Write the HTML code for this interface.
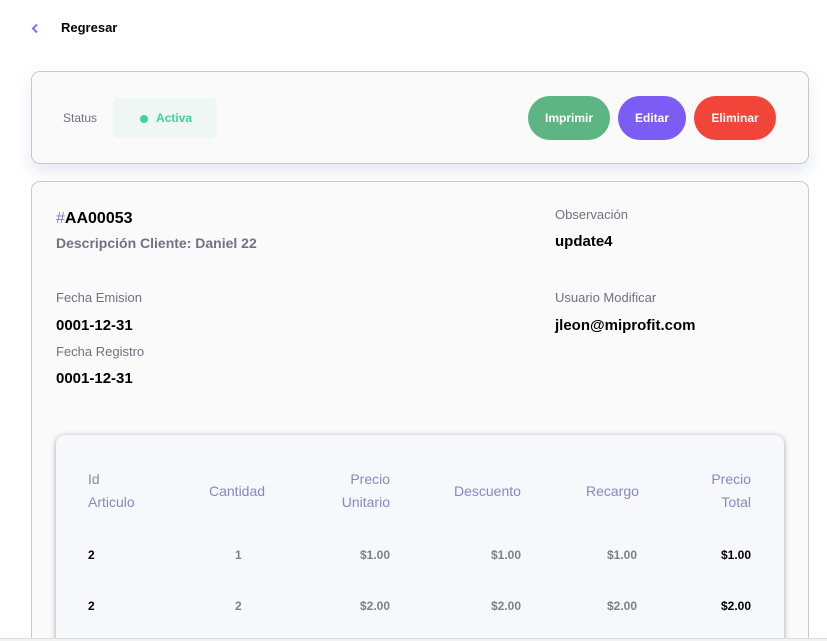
<!DOCTYPE html>
<html><head><meta charset="utf-8"><style>
*{margin:0;padding:0;box-sizing:border-box}
html,body{width:827px;height:641px;overflow:hidden}
body{background:#fff;font-family:"Liberation Sans",sans-serif;position:relative}
.a{position:absolute;white-space:nowrap}
.card{position:absolute;left:31px;width:778px;background:#fafafa;border:1px solid #c8c8c8;border-radius:9px}
.btn{position:absolute;top:96px;height:44px;border-radius:22px;color:#fff;font-size:12px;font-weight:bold;display:flex;align-items:center;justify-content:center}
.lbl{font-size:13px;color:#6e7280}
.val{font-size:15px;font-weight:bold;color:#000}
.th{font-size:14px;color:#8589c2;line-height:23px}
.td{font-size:12px;font-weight:bold;color:#808080}
</style></head><body>
<svg class="a" style="left:31px;top:23px" width="8" height="11" viewBox="0 0 8 11"><path d="M6 1.5 L2 5.5 L6 9.5" stroke="#8b6cf0" stroke-width="2" fill="none"/></svg>
<div class="a" style="left:61px;top:20px;font-size:13px;font-weight:bold">Regresar</div>

<div class="card" style="top:71px;height:93px;box-shadow:0 8px 16px rgba(200,205,230,0.45)"></div>
<div class="a lbl" style="left:63px;top:111px;font-size:12px">Status</div>
<div class="a" style="left:113px;top:98px;width:104px;height:40px;background:#eef7f3;border-radius:6px"></div>
<div class="a" style="left:140px;top:115px;width:8px;height:8px;border-radius:50%;background:#3dd498"></div>
<div class="a" style="left:156px;top:111px;font-size:12px;font-weight:bold;color:#3dd498">Activa</div>
<div class="btn" style="left:528px;width:82px;background:#5db583">Imprimir</div>
<div class="btn" style="left:618px;width:68px;background:#7b5cf5">Editar</div>
<div class="btn" style="left:694px;width:82px;background:#f2453a">Eliminar</div>

<div class="card" style="top:181px;height:480px"></div>
<div class="a" style="left:56px;top:210px;font-size:16px;font-weight:bold"><span style="color:#7b7fc0;font-weight:normal">#</span>AA00053</div>
<div class="a" style="left:56px;top:235px;font-size:14px;font-weight:bold;color:#707480">Descripción Cliente: Daniel 22</div>
<div class="a lbl" style="left:555px;top:207px">Observación</div>
<div class="a val" style="left:555px;top:233px">update4</div>
<div class="a lbl" style="left:56px;top:290px">Fecha Emision</div>
<div class="a val" style="left:56px;top:317px">0001-12-31</div>
<div class="a lbl" style="left:56px;top:344px">Fecha Registro</div>
<div class="a val" style="left:56px;top:370px">0001-12-31</div>
<div class="a lbl" style="left:555px;top:290px">Usuario Modificar</div>
<div class="a val" style="left:555px;top:317px">jleon@miprofit.com</div>

<div class="a" style="left:56px;top:435px;width:728px;height:230px;background:#f7f8fc;border-radius:9px;box-shadow:0 1px 6px rgba(0,0,0,0.35)"></div>
<div class="a th" style="left:88px;top:468px">Id<br>Articulo</div>
<div class="a th" style="left:209px;top:480px">Cantidad</div>
<div class="a th" style="right:437px;top:468px;text-align:right">Precio<br>Unitario</div>
<div class="a th" style="left:454px;top:480px">Descuento</div>
<div class="a th" style="left:586px;top:480px">Recargo</div>
<div class="a th" style="right:76px;top:468px;text-align:right">Precio<br>Total</div>

<div class="a td" style="left:88px;top:548px;color:#000">2</div>
<div class="a td" style="left:235px;top:548px">1</div>
<div class="a td" style="right:437px;top:548px">$1.00</div>
<div class="a td" style="right:306px;top:548px">$1.00</div>
<div class="a td" style="right:190px;top:548px">$1.00</div>
<div class="a td" style="right:76px;top:548px;color:#000">$1.00</div>

<div class="a td" style="left:88px;top:599px;color:#000">2</div>
<div class="a td" style="left:235px;top:599px">2</div>
<div class="a td" style="right:437px;top:599px">$2.00</div>
<div class="a td" style="right:306px;top:599px">$2.00</div>
<div class="a td" style="right:190px;top:599px">$2.00</div>
<div class="a td" style="right:76px;top:599px;color:#000">$2.00</div>
<div class="a" style="left:0;top:638px;width:827px;height:3px;background:#f2f2f2;border-top:1px solid #ddd"></div>
</body></html>
